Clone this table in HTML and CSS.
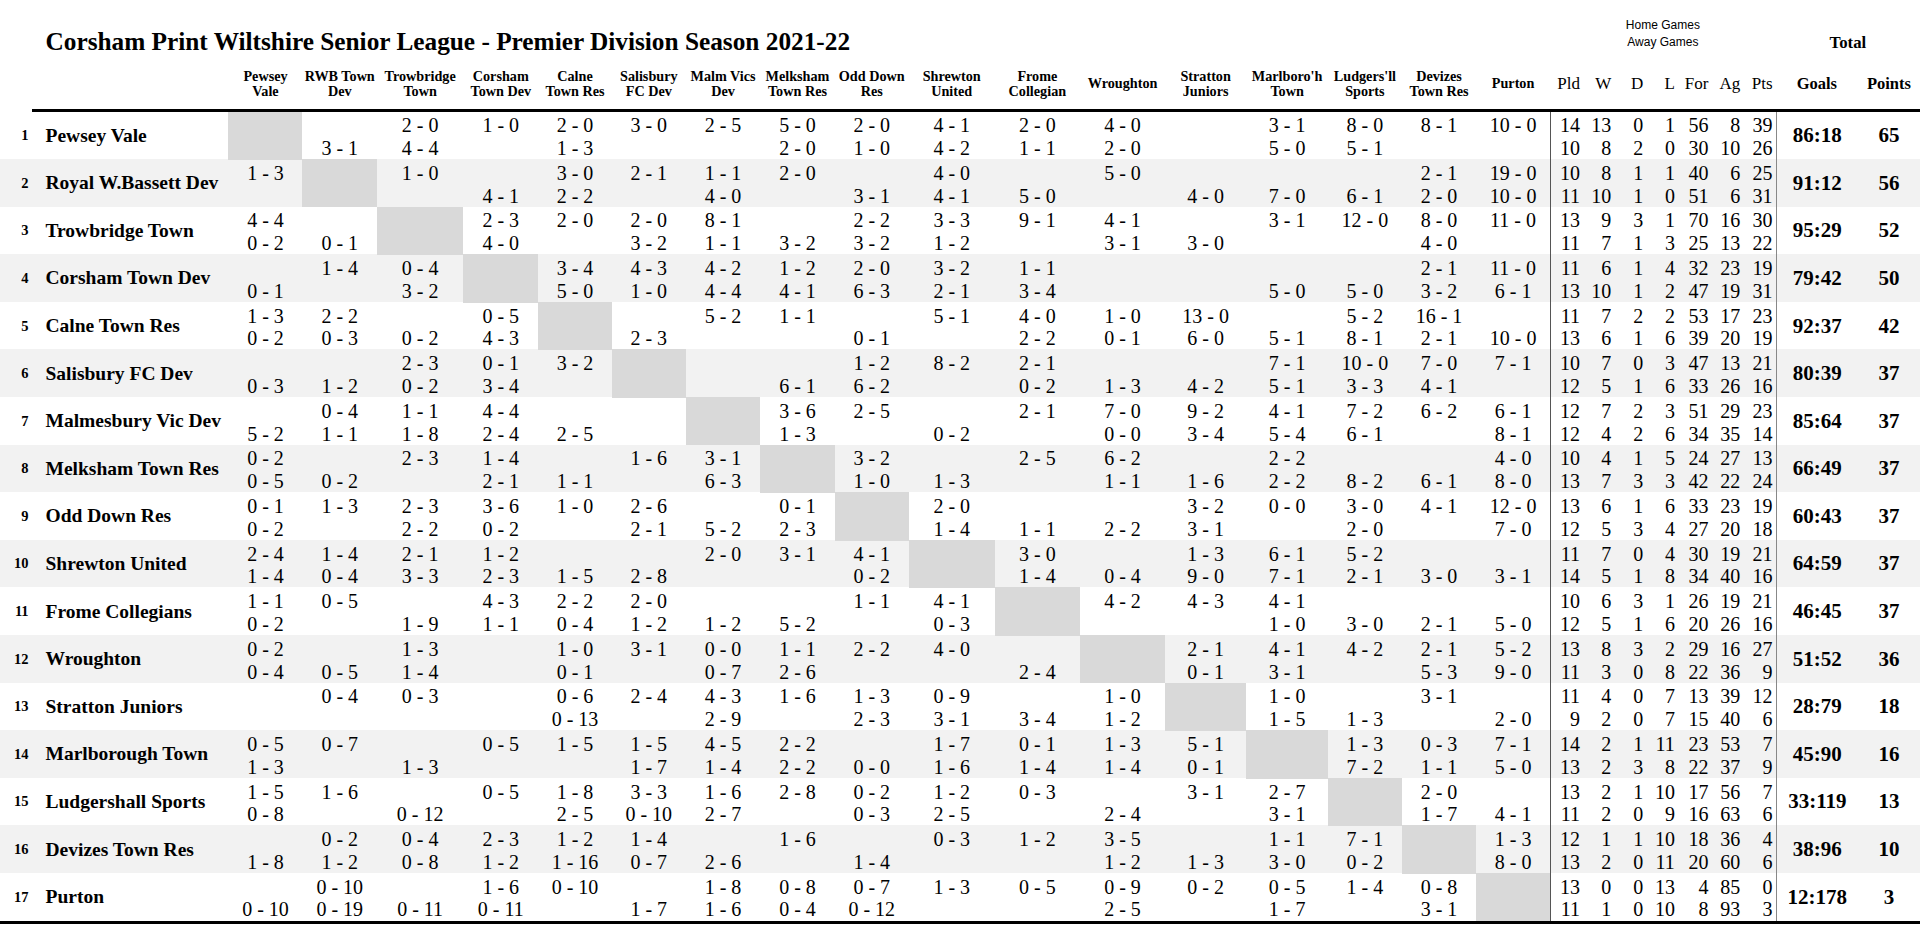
FILE: index.html
```html
<!DOCTYPE html>
<html lang="en">
<head>
<meta charset="utf-8">
<title>Corsham Print Wiltshire Senior League - Premier Division Season 2021-22</title>
<link rel="stylesheet" href="styles.css">
</head>
<body>
<div class="league">
  <div class="top">
    <div class="title">Corsham Print Wiltshire Senior League - Premier Division Season 2021-22</div>
    <div class="ha">Home Games<br>Away Games</div>
    <div class="total">Total</div>
  </div>
  <div class="head">
    <div class="blank0"></div>
    <div></div>
    <div>Pewsey<br>Vale</div>
    <div>RWB Town<br>Dev</div>
    <div>Trowbridge<br>Town</div>
    <div>Corsham<br>Town Dev</div>
    <div>Calne<br>Town Res</div>
    <div>Salisbury<br>FC Dev</div>
    <div>Malm Vics<br>Dev</div>
    <div>Melksham<br>Town Res</div>
    <div>Odd Down<br>Res</div>
    <div>Shrewton<br>United</div>
    <div>Frome<br>Collegian</div>
    <div>Wroughton</div>
    <div>Stratton<br>Juniors</div>
    <div>Marlboro'h<br>Town</div>
    <div>Ludgers'll<br>Sports</div>
    <div>Devizes<br>Town Res</div>
    <div>Purton</div>
    <div class="stat">Pld</div>
    <div class="stat">W</div>
    <div class="stat">D</div>
    <div class="stat">L</div>
    <div class="stat">For</div>
    <div class="stat">Ag</div>
    <div class="stat p">Pts</div>
    <div class="big">Goals</div>
    <div class="big">Points</div>
  </div>
  <div class="body">
    <div class="row">
      <div class="rk">1</div><div class="tm">Pewsey Vale</div>
      <div class="c x"></div>
      <div class="c"><span></span><span>3 - 1</span></div>
      <div class="c"><span>2 - 0</span><span>4 - 4</span></div>
      <div class="c"><span>1 - 0</span></div>
      <div class="c"><span>2 - 0</span><span>1 - 3</span></div>
      <div class="c"><span>3 - 0</span></div>
      <div class="c"><span>2 - 5</span></div>
      <div class="c"><span>5 - 0</span><span>2 - 0</span></div>
      <div class="c"><span>2 - 0</span><span>1 - 0</span></div>
      <div class="c"><span>4 - 1</span><span>4 - 2</span></div>
      <div class="c"><span>2 - 0</span><span>1 - 1</span></div>
      <div class="c"><span>4 - 0</span><span>2 - 0</span></div>
      <div class="c"></div>
      <div class="c"><span>3 - 1</span><span>5 - 0</span></div>
      <div class="c"><span>8 - 0</span><span>5 - 1</span></div>
      <div class="c"><span>8 - 1</span></div>
      <div class="c"><span>10 - 0</span></div>
      <div class="s l"><span>14</span><span>10</span></div>
      <div class="s"><span>13</span><span>8</span></div>
      <div class="s"><span>0</span><span>2</span></div>
      <div class="s"><span>1</span><span>0</span></div>
      <div class="s"><span>56</span><span>30</span></div>
      <div class="s"><span>8</span><span>10</span></div>
      <div class="s p"><span>39</span><span>26</span></div>
      <div class="gl">86:18</div><div class="pt">65</div>
    </div>
    <div class="row">
      <div class="rk">2</div><div class="tm">Royal W.Bassett Dev</div>
      <div class="c"><span>1 - 3</span></div>
      <div class="c x"></div>
      <div class="c"><span>1 - 0</span></div>
      <div class="c"><span></span><span>4 - 1</span></div>
      <div class="c"><span>3 - 0</span><span>2 - 2</span></div>
      <div class="c"><span>2 - 1</span></div>
      <div class="c"><span>1 - 1</span><span>4 - 0</span></div>
      <div class="c"><span>2 - 0</span></div>
      <div class="c"><span></span><span>3 - 1</span></div>
      <div class="c"><span>4 - 0</span><span>4 - 1</span></div>
      <div class="c"><span></span><span>5 - 0</span></div>
      <div class="c"><span>5 - 0</span></div>
      <div class="c"><span></span><span>4 - 0</span></div>
      <div class="c"><span></span><span>7 - 0</span></div>
      <div class="c"><span></span><span>6 - 1</span></div>
      <div class="c"><span>2 - 1</span><span>2 - 0</span></div>
      <div class="c"><span>19 - 0</span><span>10 - 0</span></div>
      <div class="s l"><span>10</span><span>11</span></div>
      <div class="s"><span>8</span><span>10</span></div>
      <div class="s"><span>1</span><span>1</span></div>
      <div class="s"><span>1</span><span>0</span></div>
      <div class="s"><span>40</span><span>51</span></div>
      <div class="s"><span>6</span><span>6</span></div>
      <div class="s p"><span>25</span><span>31</span></div>
      <div class="gl">91:12</div><div class="pt">56</div>
    </div>
    <div class="row">
      <div class="rk">3</div><div class="tm">Trowbridge Town</div>
      <div class="c"><span>4 - 4</span><span>0 - 2</span></div>
      <div class="c"><span></span><span>0 - 1</span></div>
      <div class="c x"></div>
      <div class="c"><span>2 - 3</span><span>4 - 0</span></div>
      <div class="c"><span>2 - 0</span></div>
      <div class="c"><span>2 - 0</span><span>3 - 2</span></div>
      <div class="c"><span>8 - 1</span><span>1 - 1</span></div>
      <div class="c"><span></span><span>3 - 2</span></div>
      <div class="c"><span>2 - 2</span><span>3 - 2</span></div>
      <div class="c"><span>3 - 3</span><span>1 - 2</span></div>
      <div class="c"><span>9 - 1</span></div>
      <div class="c"><span>4 - 1</span><span>3 - 1</span></div>
      <div class="c"><span></span><span>3 - 0</span></div>
      <div class="c"><span>3 - 1</span></div>
      <div class="c"><span>12 - 0</span></div>
      <div class="c"><span>8 - 0</span><span>4 - 0</span></div>
      <div class="c"><span>11 - 0</span></div>
      <div class="s l"><span>13</span><span>11</span></div>
      <div class="s"><span>9</span><span>7</span></div>
      <div class="s"><span>3</span><span>1</span></div>
      <div class="s"><span>1</span><span>3</span></div>
      <div class="s"><span>70</span><span>25</span></div>
      <div class="s"><span>16</span><span>13</span></div>
      <div class="s p"><span>30</span><span>22</span></div>
      <div class="gl">95:29</div><div class="pt">52</div>
    </div>
    <div class="row">
      <div class="rk">4</div><div class="tm">Corsham Town Dev</div>
      <div class="c"><span></span><span>0 - 1</span></div>
      <div class="c"><span>1 - 4</span></div>
      <div class="c"><span>0 - 4</span><span>3 - 2</span></div>
      <div class="c x"></div>
      <div class="c"><span>3 - 4</span><span>5 - 0</span></div>
      <div class="c"><span>4 - 3</span><span>1 - 0</span></div>
      <div class="c"><span>4 - 2</span><span>4 - 4</span></div>
      <div class="c"><span>1 - 2</span><span>4 - 1</span></div>
      <div class="c"><span>2 - 0</span><span>6 - 3</span></div>
      <div class="c"><span>3 - 2</span><span>2 - 1</span></div>
      <div class="c"><span>1 - 1</span><span>3 - 4</span></div>
      <div class="c"></div>
      <div class="c"></div>
      <div class="c"><span></span><span>5 - 0</span></div>
      <div class="c"><span></span><span>5 - 0</span></div>
      <div class="c"><span>2 - 1</span><span>3 - 2</span></div>
      <div class="c"><span>11 - 0</span><span>6 - 1</span></div>
      <div class="s l"><span>11</span><span>13</span></div>
      <div class="s"><span>6</span><span>10</span></div>
      <div class="s"><span>1</span><span>1</span></div>
      <div class="s"><span>4</span><span>2</span></div>
      <div class="s"><span>32</span><span>47</span></div>
      <div class="s"><span>23</span><span>19</span></div>
      <div class="s p"><span>19</span><span>31</span></div>
      <div class="gl">79:42</div><div class="pt">50</div>
    </div>
    <div class="row">
      <div class="rk">5</div><div class="tm">Calne Town Res</div>
      <div class="c"><span>1 - 3</span><span>0 - 2</span></div>
      <div class="c"><span>2 - 2</span><span>0 - 3</span></div>
      <div class="c"><span></span><span>0 - 2</span></div>
      <div class="c"><span>0 - 5</span><span>4 - 3</span></div>
      <div class="c x"></div>
      <div class="c"><span></span><span>2 - 3</span></div>
      <div class="c"><span>5 - 2</span></div>
      <div class="c"><span>1 - 1</span></div>
      <div class="c"><span></span><span>0 - 1</span></div>
      <div class="c"><span>5 - 1</span></div>
      <div class="c"><span>4 - 0</span><span>2 - 2</span></div>
      <div class="c"><span>1 - 0</span><span>0 - 1</span></div>
      <div class="c"><span>13 - 0</span><span>6 - 0</span></div>
      <div class="c"><span></span><span>5 - 1</span></div>
      <div class="c"><span>5 - 2</span><span>8 - 1</span></div>
      <div class="c"><span>16 - 1</span><span>2 - 1</span></div>
      <div class="c"><span></span><span>10 - 0</span></div>
      <div class="s l"><span>11</span><span>13</span></div>
      <div class="s"><span>7</span><span>6</span></div>
      <div class="s"><span>2</span><span>1</span></div>
      <div class="s"><span>2</span><span>6</span></div>
      <div class="s"><span>53</span><span>39</span></div>
      <div class="s"><span>17</span><span>20</span></div>
      <div class="s p"><span>23</span><span>19</span></div>
      <div class="gl">92:37</div><div class="pt">42</div>
    </div>
    <div class="row">
      <div class="rk">6</div><div class="tm">Salisbury FC Dev</div>
      <div class="c"><span></span><span>0 - 3</span></div>
      <div class="c"><span></span><span>1 - 2</span></div>
      <div class="c"><span>2 - 3</span><span>0 - 2</span></div>
      <div class="c"><span>0 - 1</span><span>3 - 4</span></div>
      <div class="c"><span>3 - 2</span></div>
      <div class="c x"></div>
      <div class="c"></div>
      <div class="c"><span></span><span>6 - 1</span></div>
      <div class="c"><span>1 - 2</span><span>6 - 2</span></div>
      <div class="c"><span>8 - 2</span></div>
      <div class="c"><span>2 - 1</span><span>0 - 2</span></div>
      <div class="c"><span></span><span>1 - 3</span></div>
      <div class="c"><span></span><span>4 - 2</span></div>
      <div class="c"><span>7 - 1</span><span>5 - 1</span></div>
      <div class="c"><span>10 - 0</span><span>3 - 3</span></div>
      <div class="c"><span>7 - 0</span><span>4 - 1</span></div>
      <div class="c"><span>7 - 1</span></div>
      <div class="s l"><span>10</span><span>12</span></div>
      <div class="s"><span>7</span><span>5</span></div>
      <div class="s"><span>0</span><span>1</span></div>
      <div class="s"><span>3</span><span>6</span></div>
      <div class="s"><span>47</span><span>33</span></div>
      <div class="s"><span>13</span><span>26</span></div>
      <div class="s p"><span>21</span><span>16</span></div>
      <div class="gl">80:39</div><div class="pt">37</div>
    </div>
    <div class="row">
      <div class="rk">7</div><div class="tm">Malmesbury Vic Dev</div>
      <div class="c"><span></span><span>5 - 2</span></div>
      <div class="c"><span>0 - 4</span><span>1 - 1</span></div>
      <div class="c"><span>1 - 1</span><span>1 - 8</span></div>
      <div class="c"><span>4 - 4</span><span>2 - 4</span></div>
      <div class="c"><span></span><span>2 - 5</span></div>
      <div class="c"></div>
      <div class="c x"></div>
      <div class="c"><span>3 - 6</span><span>1 - 3</span></div>
      <div class="c"><span>2 - 5</span></div>
      <div class="c"><span></span><span>0 - 2</span></div>
      <div class="c"><span>2 - 1</span></div>
      <div class="c"><span>7 - 0</span><span>0 - 0</span></div>
      <div class="c"><span>9 - 2</span><span>3 - 4</span></div>
      <div class="c"><span>4 - 1</span><span>5 - 4</span></div>
      <div class="c"><span>7 - 2</span><span>6 - 1</span></div>
      <div class="c"><span>6 - 2</span></div>
      <div class="c"><span>6 - 1</span><span>8 - 1</span></div>
      <div class="s l"><span>12</span><span>12</span></div>
      <div class="s"><span>7</span><span>4</span></div>
      <div class="s"><span>2</span><span>2</span></div>
      <div class="s"><span>3</span><span>6</span></div>
      <div class="s"><span>51</span><span>34</span></div>
      <div class="s"><span>29</span><span>35</span></div>
      <div class="s p"><span>23</span><span>14</span></div>
      <div class="gl">85:64</div><div class="pt">37</div>
    </div>
    <div class="row">
      <div class="rk">8</div><div class="tm">Melksham Town Res</div>
      <div class="c"><span>0 - 2</span><span>0 - 5</span></div>
      <div class="c"><span></span><span>0 - 2</span></div>
      <div class="c"><span>2 - 3</span></div>
      <div class="c"><span>1 - 4</span><span>2 - 1</span></div>
      <div class="c"><span></span><span>1 - 1</span></div>
      <div class="c"><span>1 - 6</span></div>
      <div class="c"><span>3 - 1</span><span>6 - 3</span></div>
      <div class="c x"></div>
      <div class="c"><span>3 - 2</span><span>1 - 0</span></div>
      <div class="c"><span></span><span>1 - 3</span></div>
      <div class="c"><span>2 - 5</span></div>
      <div class="c"><span>6 - 2</span><span>1 - 1</span></div>
      <div class="c"><span></span><span>1 - 6</span></div>
      <div class="c"><span>2 - 2</span><span>2 - 2</span></div>
      <div class="c"><span></span><span>8 - 2</span></div>
      <div class="c"><span></span><span>6 - 1</span></div>
      <div class="c"><span>4 - 0</span><span>8 - 0</span></div>
      <div class="s l"><span>10</span><span>13</span></div>
      <div class="s"><span>4</span><span>7</span></div>
      <div class="s"><span>1</span><span>3</span></div>
      <div class="s"><span>5</span><span>3</span></div>
      <div class="s"><span>24</span><span>42</span></div>
      <div class="s"><span>27</span><span>22</span></div>
      <div class="s p"><span>13</span><span>24</span></div>
      <div class="gl">66:49</div><div class="pt">37</div>
    </div>
    <div class="row">
      <div class="rk">9</div><div class="tm">Odd Down Res</div>
      <div class="c"><span>0 - 1</span><span>0 - 2</span></div>
      <div class="c"><span>1 - 3</span></div>
      <div class="c"><span>2 - 3</span><span>2 - 2</span></div>
      <div class="c"><span>3 - 6</span><span>0 - 2</span></div>
      <div class="c"><span>1 - 0</span></div>
      <div class="c"><span>2 - 6</span><span>2 - 1</span></div>
      <div class="c"><span></span><span>5 - 2</span></div>
      <div class="c"><span>0 - 1</span><span>2 - 3</span></div>
      <div class="c x"></div>
      <div class="c"><span>2 - 0</span><span>1 - 4</span></div>
      <div class="c"><span></span><span>1 - 1</span></div>
      <div class="c"><span></span><span>2 - 2</span></div>
      <div class="c"><span>3 - 2</span><span>3 - 1</span></div>
      <div class="c"><span>0 - 0</span></div>
      <div class="c"><span>3 - 0</span><span>2 - 0</span></div>
      <div class="c"><span>4 - 1</span></div>
      <div class="c"><span>12 - 0</span><span>7 - 0</span></div>
      <div class="s l"><span>13</span><span>12</span></div>
      <div class="s"><span>6</span><span>5</span></div>
      <div class="s"><span>1</span><span>3</span></div>
      <div class="s"><span>6</span><span>4</span></div>
      <div class="s"><span>33</span><span>27</span></div>
      <div class="s"><span>23</span><span>20</span></div>
      <div class="s p"><span>19</span><span>18</span></div>
      <div class="gl">60:43</div><div class="pt">37</div>
    </div>
    <div class="row">
      <div class="rk">10</div><div class="tm">Shrewton United</div>
      <div class="c"><span>2 - 4</span><span>1 - 4</span></div>
      <div class="c"><span>1 - 4</span><span>0 - 4</span></div>
      <div class="c"><span>2 - 1</span><span>3 - 3</span></div>
      <div class="c"><span>1 - 2</span><span>2 - 3</span></div>
      <div class="c"><span></span><span>1 - 5</span></div>
      <div class="c"><span></span><span>2 - 8</span></div>
      <div class="c"><span>2 - 0</span></div>
      <div class="c"><span>3 - 1</span></div>
      <div class="c"><span>4 - 1</span><span>0 - 2</span></div>
      <div class="c x"></div>
      <div class="c"><span>3 - 0</span><span>1 - 4</span></div>
      <div class="c"><span></span><span>0 - 4</span></div>
      <div class="c"><span>1 - 3</span><span>9 - 0</span></div>
      <div class="c"><span>6 - 1</span><span>7 - 1</span></div>
      <div class="c"><span>5 - 2</span><span>2 - 1</span></div>
      <div class="c"><span></span><span>3 - 0</span></div>
      <div class="c"><span></span><span>3 - 1</span></div>
      <div class="s l"><span>11</span><span>14</span></div>
      <div class="s"><span>7</span><span>5</span></div>
      <div class="s"><span>0</span><span>1</span></div>
      <div class="s"><span>4</span><span>8</span></div>
      <div class="s"><span>30</span><span>34</span></div>
      <div class="s"><span>19</span><span>40</span></div>
      <div class="s p"><span>21</span><span>16</span></div>
      <div class="gl">64:59</div><div class="pt">37</div>
    </div>
    <div class="row">
      <div class="rk">11</div><div class="tm">Frome Collegians</div>
      <div class="c"><span>1 - 1</span><span>0 - 2</span></div>
      <div class="c"><span>0 - 5</span></div>
      <div class="c"><span></span><span>1 - 9</span></div>
      <div class="c"><span>4 - 3</span><span>1 - 1</span></div>
      <div class="c"><span>2 - 2</span><span>0 - 4</span></div>
      <div class="c"><span>2 - 0</span><span>1 - 2</span></div>
      <div class="c"><span></span><span>1 - 2</span></div>
      <div class="c"><span></span><span>5 - 2</span></div>
      <div class="c"><span>1 - 1</span></div>
      <div class="c"><span>4 - 1</span><span>0 - 3</span></div>
      <div class="c x"></div>
      <div class="c"><span>4 - 2</span></div>
      <div class="c"><span>4 - 3</span></div>
      <div class="c"><span>4 - 1</span><span>1 - 0</span></div>
      <div class="c"><span></span><span>3 - 0</span></div>
      <div class="c"><span></span><span>2 - 1</span></div>
      <div class="c"><span></span><span>5 - 0</span></div>
      <div class="s l"><span>10</span><span>12</span></div>
      <div class="s"><span>6</span><span>5</span></div>
      <div class="s"><span>3</span><span>1</span></div>
      <div class="s"><span>1</span><span>6</span></div>
      <div class="s"><span>26</span><span>20</span></div>
      <div class="s"><span>19</span><span>26</span></div>
      <div class="s p"><span>21</span><span>16</span></div>
      <div class="gl">46:45</div><div class="pt">37</div>
    </div>
    <div class="row">
      <div class="rk">12</div><div class="tm">Wroughton</div>
      <div class="c"><span>0 - 2</span><span>0 - 4</span></div>
      <div class="c"><span></span><span>0 - 5</span></div>
      <div class="c"><span>1 - 3</span><span>1 - 4</span></div>
      <div class="c"></div>
      <div class="c"><span>1 - 0</span><span>0 - 1</span></div>
      <div class="c"><span>3 - 1</span></div>
      <div class="c"><span>0 - 0</span><span>0 - 7</span></div>
      <div class="c"><span>1 - 1</span><span>2 - 6</span></div>
      <div class="c"><span>2 - 2</span></div>
      <div class="c"><span>4 - 0</span></div>
      <div class="c"><span></span><span>2 - 4</span></div>
      <div class="c x"></div>
      <div class="c"><span>2 - 1</span><span>0 - 1</span></div>
      <div class="c"><span>4 - 1</span><span>3 - 1</span></div>
      <div class="c"><span>4 - 2</span></div>
      <div class="c"><span>2 - 1</span><span>5 - 3</span></div>
      <div class="c"><span>5 - 2</span><span>9 - 0</span></div>
      <div class="s l"><span>13</span><span>11</span></div>
      <div class="s"><span>8</span><span>3</span></div>
      <div class="s"><span>3</span><span>0</span></div>
      <div class="s"><span>2</span><span>8</span></div>
      <div class="s"><span>29</span><span>22</span></div>
      <div class="s"><span>16</span><span>36</span></div>
      <div class="s p"><span>27</span><span>9</span></div>
      <div class="gl">51:52</div><div class="pt">36</div>
    </div>
    <div class="row">
      <div class="rk">13</div><div class="tm">Stratton Juniors</div>
      <div class="c"></div>
      <div class="c"><span>0 - 4</span></div>
      <div class="c"><span>0 - 3</span></div>
      <div class="c"></div>
      <div class="c"><span>0 - 6</span><span>0 - 13</span></div>
      <div class="c"><span>2 - 4</span></div>
      <div class="c"><span>4 - 3</span><span>2 - 9</span></div>
      <div class="c"><span>1 - 6</span></div>
      <div class="c"><span>1 - 3</span><span>2 - 3</span></div>
      <div class="c"><span>0 - 9</span><span>3 - 1</span></div>
      <div class="c"><span></span><span>3 - 4</span></div>
      <div class="c"><span>1 - 0</span><span>1 - 2</span></div>
      <div class="c x"></div>
      <div class="c"><span>1 - 0</span><span>1 - 5</span></div>
      <div class="c"><span></span><span>1 - 3</span></div>
      <div class="c"><span>3 - 1</span></div>
      <div class="c"><span></span><span>2 - 0</span></div>
      <div class="s l"><span>11</span><span>9</span></div>
      <div class="s"><span>4</span><span>2</span></div>
      <div class="s"><span>0</span><span>0</span></div>
      <div class="s"><span>7</span><span>7</span></div>
      <div class="s"><span>13</span><span>15</span></div>
      <div class="s"><span>39</span><span>40</span></div>
      <div class="s p"><span>12</span><span>6</span></div>
      <div class="gl">28:79</div><div class="pt">18</div>
    </div>
    <div class="row">
      <div class="rk">14</div><div class="tm">Marlborough Town</div>
      <div class="c"><span>0 - 5</span><span>1 - 3</span></div>
      <div class="c"><span>0 - 7</span></div>
      <div class="c"><span></span><span>1 - 3</span></div>
      <div class="c"><span>0 - 5</span></div>
      <div class="c"><span>1 - 5</span></div>
      <div class="c"><span>1 - 5</span><span>1 - 7</span></div>
      <div class="c"><span>4 - 5</span><span>1 - 4</span></div>
      <div class="c"><span>2 - 2</span><span>2 - 2</span></div>
      <div class="c"><span></span><span>0 - 0</span></div>
      <div class="c"><span>1 - 7</span><span>1 - 6</span></div>
      <div class="c"><span>0 - 1</span><span>1 - 4</span></div>
      <div class="c"><span>1 - 3</span><span>1 - 4</span></div>
      <div class="c"><span>5 - 1</span><span>0 - 1</span></div>
      <div class="c x"></div>
      <div class="c"><span>1 - 3</span><span>7 - 2</span></div>
      <div class="c"><span>0 - 3</span><span>1 - 1</span></div>
      <div class="c"><span>7 - 1</span><span>5 - 0</span></div>
      <div class="s l"><span>14</span><span>13</span></div>
      <div class="s"><span>2</span><span>2</span></div>
      <div class="s"><span>1</span><span>3</span></div>
      <div class="s"><span>11</span><span>8</span></div>
      <div class="s"><span>23</span><span>22</span></div>
      <div class="s"><span>53</span><span>37</span></div>
      <div class="s p"><span>7</span><span>9</span></div>
      <div class="gl">45:90</div><div class="pt">16</div>
    </div>
    <div class="row">
      <div class="rk">15</div><div class="tm">Ludgershall Sports</div>
      <div class="c"><span>1 - 5</span><span>0 - 8</span></div>
      <div class="c"><span>1 - 6</span></div>
      <div class="c"><span></span><span>0 - 12</span></div>
      <div class="c"><span>0 - 5</span></div>
      <div class="c"><span>1 - 8</span><span>2 - 5</span></div>
      <div class="c"><span>3 - 3</span><span>0 - 10</span></div>
      <div class="c"><span>1 - 6</span><span>2 - 7</span></div>
      <div class="c"><span>2 - 8</span></div>
      <div class="c"><span>0 - 2</span><span>0 - 3</span></div>
      <div class="c"><span>1 - 2</span><span>2 - 5</span></div>
      <div class="c"><span>0 - 3</span></div>
      <div class="c"><span></span><span>2 - 4</span></div>
      <div class="c"><span>3 - 1</span></div>
      <div class="c"><span>2 - 7</span><span>3 - 1</span></div>
      <div class="c x"></div>
      <div class="c"><span>2 - 0</span><span>1 - 7</span></div>
      <div class="c"><span></span><span>4 - 1</span></div>
      <div class="s l"><span>13</span><span>11</span></div>
      <div class="s"><span>2</span><span>2</span></div>
      <div class="s"><span>1</span><span>0</span></div>
      <div class="s"><span>10</span><span>9</span></div>
      <div class="s"><span>17</span><span>16</span></div>
      <div class="s"><span>56</span><span>63</span></div>
      <div class="s p"><span>7</span><span>6</span></div>
      <div class="gl">33:119</div><div class="pt">13</div>
    </div>
    <div class="row">
      <div class="rk">16</div><div class="tm">Devizes Town Res</div>
      <div class="c"><span></span><span>1 - 8</span></div>
      <div class="c"><span>0 - 2</span><span>1 - 2</span></div>
      <div class="c"><span>0 - 4</span><span>0 - 8</span></div>
      <div class="c"><span>2 - 3</span><span>1 - 2</span></div>
      <div class="c"><span>1 - 2</span><span>1 - 16</span></div>
      <div class="c"><span>1 - 4</span><span>0 - 7</span></div>
      <div class="c"><span></span><span>2 - 6</span></div>
      <div class="c"><span>1 - 6</span></div>
      <div class="c"><span></span><span>1 - 4</span></div>
      <div class="c"><span>0 - 3</span></div>
      <div class="c"><span>1 - 2</span></div>
      <div class="c"><span>3 - 5</span><span>1 - 2</span></div>
      <div class="c"><span></span><span>1 - 3</span></div>
      <div class="c"><span>1 - 1</span><span>3 - 0</span></div>
      <div class="c"><span>7 - 1</span><span>0 - 2</span></div>
      <div class="c x"></div>
      <div class="c"><span>1 - 3</span><span>8 - 0</span></div>
      <div class="s l"><span>12</span><span>13</span></div>
      <div class="s"><span>1</span><span>2</span></div>
      <div class="s"><span>1</span><span>0</span></div>
      <div class="s"><span>10</span><span>11</span></div>
      <div class="s"><span>18</span><span>20</span></div>
      <div class="s"><span>36</span><span>60</span></div>
      <div class="s p"><span>4</span><span>6</span></div>
      <div class="gl">38:96</div><div class="pt">10</div>
    </div>
    <div class="row">
      <div class="rk">17</div><div class="tm">Purton</div>
      <div class="c"><span></span><span>0 - 10</span></div>
      <div class="c"><span>0 - 10</span><span>0 - 19</span></div>
      <div class="c"><span></span><span>0 - 11</span></div>
      <div class="c"><span>1 - 6</span><span>0 - 11</span></div>
      <div class="c"><span>0 - 10</span></div>
      <div class="c"><span></span><span>1 - 7</span></div>
      <div class="c"><span>1 - 8</span><span>1 - 6</span></div>
      <div class="c"><span>0 - 8</span><span>0 - 4</span></div>
      <div class="c"><span>0 - 7</span><span>0 - 12</span></div>
      <div class="c"><span>1 - 3</span></div>
      <div class="c"><span>0 - 5</span></div>
      <div class="c"><span>0 - 9</span><span>2 - 5</span></div>
      <div class="c"><span>0 - 2</span></div>
      <div class="c"><span>0 - 5</span><span>1 - 7</span></div>
      <div class="c"><span>1 - 4</span></div>
      <div class="c"><span>0 - 8</span><span>3 - 1</span></div>
      <div class="c x"></div>
      <div class="s l"><span>13</span><span>11</span></div>
      <div class="s"><span>0</span><span>1</span></div>
      <div class="s"><span>0</span><span>0</span></div>
      <div class="s"><span>13</span><span>10</span></div>
      <div class="s"><span>4</span><span>8</span></div>
      <div class="s"><span>85</span><span>93</span></div>
      <div class="s p"><span>0</span><span>3</span></div>
      <div class="gl">12:178</div><div class="pt">3</div>
    </div>
  </div>
</div>
</body>
</html>
```

FILE: styles.css
```css
* {
  box-sizing: border-box;
  margin: 0;
  padding: 0;
}

html, body {
  margin: 0;
  background: #ffffff;
}

body {
  width: 1920px;
  overflow: hidden;
  font-family: "Liberation Serif", "Times New Roman", serif;
  color: #000000;
}

.league {
  --cols: 31.6px 196.9px 74px 74.5px 86.3px 75px 73.5px 74px 74.5px 74.4px 74.1px 85.9px 85.4px 85px 81.2px 81.8px 73.8px 74.4px 73.7px 30px 31.4px 31.9px 31.7px 33.6px 31.8px 35.6px 82px 1fr;
}

.top,
.head,
.row {
  display: grid;
  grid-template-columns: var(--cols);
}

.top {
  height: 60px;
}

.title {
  grid-column: 2 / 20;
  padding: 25.5px 0 0 13.9px;
  font-size: 25.3px;
  line-height: 30px;
  font-weight: bold;
  white-space: nowrap;
}

.ha {
  grid-column: 20 / 27;
  padding-top: 17px;
  font-family: "Liberation Sans", Arial, sans-serif;
  font-size: 12px;
  line-height: 16.7px;
  text-align: center;
  white-space: nowrap;
}

.total {
  grid-column: 27 / 29;
  padding-top: 32.9px;
  font-size: 16.8px;
  line-height: 20px;
  font-weight: bold;
  text-align: center;
}

.head > div {
  height: 51.5px;
  border-bottom: 3px solid #000000;
  display: flex;
  align-items: center;
  justify-content: center;
  text-align: center;
  font-size: 14.2px;
  line-height: 15.7px;
  font-weight: bold;
  white-space: nowrap;
}

.head > .blank0 {
  border-bottom: none;
}

.head > .stat {
  justify-content: flex-end;
  font-weight: normal;
  font-size: 17px;
}

.head > .stat.p {
  padding-right: 3.3px;
}

.head > .big {
  font-size: 16.5px;
}

.body {
  border-bottom: 3px solid #000000;
}

.row {
  height: 47.6px;
}

.row:nth-child(even) {
  background: #f2f2f2;
}

.rk {
  display: flex;
  align-items: center;
  justify-content: flex-end;
  padding-right: 3px;
  font-weight: bold;
  font-size: 14.5px;
}

.tm {
  display: flex;
  align-items: center;
  padding-left: 13.9px;
  font-weight: bold;
  font-size: 19.5px;
  white-space: nowrap;
}

.c,
.s {
  padding-top: 2.7px;
  font-size: 20px;
}

.c {
  text-align: center;
}

.s {
  text-align: right;
}

.c span,
.s span {
  display: block;
  height: 22.8px;
  line-height: 22.8px;
  white-space: nowrap;
}

.x {
  background: #d9d9d9;
}

.s.l {
  border-left: 1px solid #555555;
}

.s.p {
  padding-right: 3.3px;
}

.gl,
.pt {
  display: flex;
  align-items: center;
  justify-content: center;
  font-weight: bold;
  font-size: 21px;
}

.gl {
  border-left: 1px solid #888888;
}
```
